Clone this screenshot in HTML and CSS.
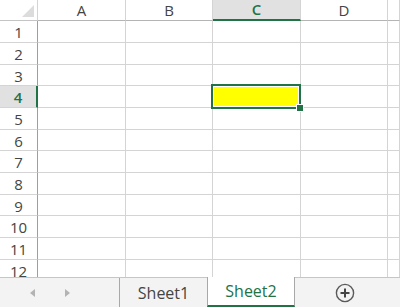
FILE: index.html
```html
<!DOCTYPE html>
<html>
<head>
<meta charset="utf-8">
<link rel="stylesheet" href="styles.css">
</head>
<body>
<div class="sheet">
  <div class="grid">
    <div class="corner"><span class="tri"></span></div>
    <div class="ch">A</div><div class="ch">B</div><div class="ch sel">C</div><div class="ch">D</div><div class="ch"></div>

    <div class="rh">1</div><div class="c"></div><div class="c"></div><div class="c"></div><div class="c"></div><div class="c"></div>
    <div class="rh">2</div><div class="c"></div><div class="c"></div><div class="c"></div><div class="c"></div><div class="c"></div>
    <div class="rh">3</div><div class="c"></div><div class="c"></div><div class="c"></div><div class="c"></div><div class="c"></div>
    <div class="rh sel">4</div><div class="c"></div><div class="c"></div><div class="c active"><span class="handle"></span></div><div class="c"></div><div class="c"></div>
    <div class="rh">5</div><div class="c"></div><div class="c"></div><div class="c"></div><div class="c"></div><div class="c"></div>
    <div class="rh">6</div><div class="c"></div><div class="c"></div><div class="c"></div><div class="c"></div><div class="c"></div>
    <div class="rh">7</div><div class="c"></div><div class="c"></div><div class="c"></div><div class="c"></div><div class="c"></div>
    <div class="rh">8</div><div class="c"></div><div class="c"></div><div class="c"></div><div class="c"></div><div class="c"></div>
    <div class="rh">9</div><div class="c"></div><div class="c"></div><div class="c"></div><div class="c"></div><div class="c"></div>
    <div class="rh">10</div><div class="c"></div><div class="c"></div><div class="c"></div><div class="c"></div><div class="c"></div>
    <div class="rh">11</div><div class="c"></div><div class="c"></div><div class="c"></div><div class="c"></div><div class="c"></div>
    <div class="rh">12</div><div class="c"></div><div class="c"></div><div class="c"></div><div class="c"></div><div class="c"></div>
  </div>
  <div class="tabs">
    <div class="nav">
      <span class="arrow left"></span>
      <span class="arrow right"></span>
    </div>
    <div class="tab">Sheet1</div>
    <div class="tab current">Sheet2</div>
    <div class="add">
      <svg width="20" height="20" viewBox="0 0 20 20">
        <circle cx="10" cy="10" r="8.6" fill="none" stroke="#5a5a5a" stroke-width="1.4"/>
        <path d="M10 5.5V14.5M5.5 10H14.5" stroke="#444" stroke-width="2" fill="none"/>
      </svg>
    </div>
  </div>
</div>
</body>
</html>
```
FILE: styles.css
```css
html, body {
  margin: 0;
  padding: 0;
  background: #fff;
}
.sheet {
  width: 400px;
  height: 307px;
  overflow: hidden;
  font-family: "Open Sans", "Noto Sans", sans-serif;
  color: #444;
}
.grid {
  display: grid;
  grid-template-columns: 38px 88px 87px 88px 87px 12px;
  grid-template-rows: 21px 22px 22px 21px 22px 22px 21px 22px 22px 21px 22px 22px 21px;
  height: 277px;
  overflow: hidden;
}
.grid > div {
  box-sizing: border-box;
  border-right: 1px solid #d4d4d4;
  border-bottom: 1px solid #d4d4d4;
}
.corner {
  position: relative;
  border-bottom-color: #c4c4c4 !important;
  border-right-color: #d4d4d4 !important;
}
.tri {
  position: absolute;
  right: 3px;
  bottom: 3px;
  width: 0;
  height: 0;
  border-left: 12px solid transparent;
  border-bottom: 12px solid #dcdcdc;
}
.ch {
  font-size: 15px;
  line-height: 20px;
  text-align: center;
  border-bottom-color: #b4b4b4 !important;
}
.ch.sel {
  background: #e1e1e1;
  color: #217346;
  font-weight: 600;
  border-bottom: 2px solid #217346 !important;
  line-height: 19px;
}
.rh {
  font-size: 15px;
  text-align: center;
  line-height: 23px;
  border-right-color: #9e9e9e !important;
}
.rh.sel {
  background: #e1e1e1;
  color: #217346;
  font-weight: 600;
  border-right: 2px solid #217346 !important;
}
.c.active {
  position: relative;
  background: #ffff00;
}
.c.active::after {
  content: "";
  position: absolute;
  left: -2px;
  top: -2px;
  right: -1px;
  bottom: -2px;
  border: 2px solid #217346;
  box-shadow: inset 0 0 0 1px #fff;
  z-index: 1;
}
.handle {
  position: absolute;
  right: -4px;
  bottom: -5px;
  width: 6px;
  height: 6px;
  background: #217346;
  border: 1px solid #fff;
  z-index: 2;
}
.tabs {
  display: flex;
  height: 30px;
  box-sizing: border-box;
  background: #f3f3f3;
  border-top: 1px solid #c6c6c6;
}
.nav {
  width: 119px;
  display: flex;
  align-items: center;
  padding-left: 30px;
  gap: 30px;
  box-sizing: border-box;
}
.arrow {
  width: 0;
  height: 0;
  border-top: 4.5px solid transparent;
  border-bottom: 4.5px solid transparent;
}
.arrow.left {
  border-right: 5px solid #b3b3b3;
}
.arrow.right {
  border-left: 5px solid #b3b3b3;
}
.tab {
  width: 88px;
  box-sizing: border-box;
  border-left: 1px solid #a8a8a8;
  font-size: 16px;
  display: flex;
  align-items: center;
  justify-content: center;
  color: #444;
}
.tab.current {
  background: #fff;
  color: #217346;
  margin-top: -1px;
  border-right: 1px solid #a8a8a8;
  border-bottom: 2px solid #217346;
}
.add {
  flex: 1;
  display: flex;
  align-items: center;
  padding-left: 40px;
}
.add svg {
  display: block;
}
```
